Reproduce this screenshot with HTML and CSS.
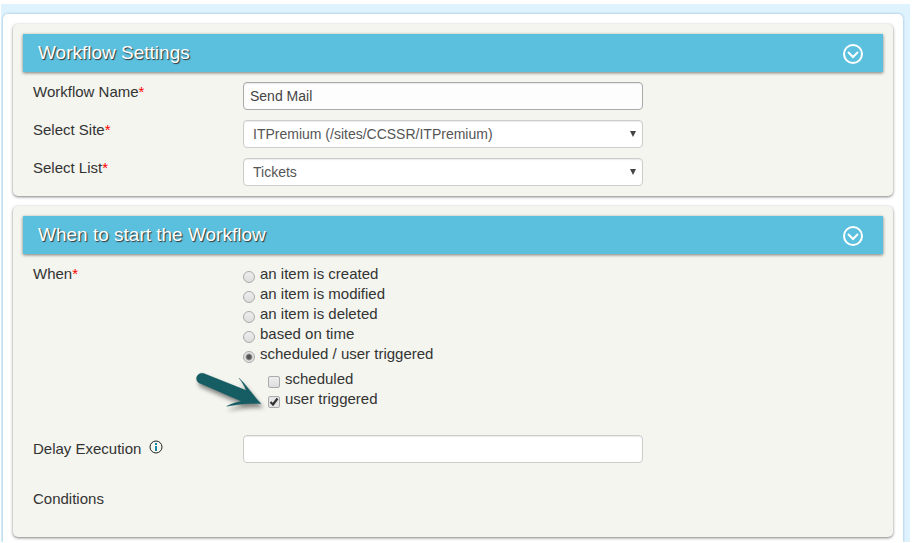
FILE: index.html
```html
<!DOCTYPE html>
<html lang="en">
<head>
<meta charset="utf-8">
<title>Workflow Settings</title>
<link rel="stylesheet" href="styles.css">
</head>
<body>
<main class="page">
<form class="sheet">
  <section class="card">
    <header class="card-header">
      <h2>Workflow Settings</h2>
      <button class="toggle" type="button" aria-label="Collapse workflow settings">
        <svg viewBox="0 0 20 20"><circle cx="10" cy="10" r="9"/><path d="M5 8l5 5 5-5"/></svg>
      </button>
    </header>
    <div class="fields">
      <div class="row">
        <label class="name" for="wf-name">Workflow Name<span class="required">*</span></label>
        <input class="control active" id="wf-name" type="text" value="Send Mail">
      </div>
      <div class="row">
        <label class="name" for="wf-site">Select Site<span class="required">*</span></label>
        <select class="control" id="wf-site"><option>ITPremium (/sites/CCSSR/ITPremium)</option></select>
      </div>
      <div class="row">
        <label class="name" for="wf-list">Select List<span class="required">*</span></label>
        <select class="control" id="wf-list"><option>Tickets</option></select>
      </div>
    </div>
  </section>

  <section class="card">
    <header class="card-header">
      <h2>When to start the Workflow</h2>
      <button class="toggle" type="button" aria-label="Collapse start options">
        <svg viewBox="0 0 20 20"><circle cx="10" cy="10" r="9"/><path d="M5 8l5 5 5-5"/></svg>
      </button>
    </header>
    <div class="fields start-fields">
      <div class="row" role="radiogroup" aria-labelledby="when-label">
        <span class="name" id="when-label">When<span class="required">*</span></span>
        <div class="options">
          <label class="option"><input type="radio" name="when">an item is created</label>
          <label class="option"><input type="radio" name="when">an item is modified</label>
          <label class="option"><input type="radio" name="when">an item is deleted</label>
          <label class="option"><input type="radio" name="when">based on time</label>
          <label class="option"><input type="radio" name="when" checked>scheduled / user triggered</label>
          <div class="suboptions">
            <label class="option"><input type="checkbox">scheduled</label>
            <label class="option"><input type="checkbox" checked>user triggered</label>
            <svg class="pointer" viewBox="0 0 240 150" aria-hidden="true">
              <path d="M40 25L168 76C164 64 157 52 147 39C166 56 190 92 213 116C180 114 145 117 110 124C126 115 142 111 154 109L26 53C12 43 22 21 40 25Z"/>
            </svg>
          </div>
        </div>
      </div>
      <div class="row centered">
        <label class="name info-label" for="delay">Delay Execution
          <svg class="info" viewBox="0 0 14 14" aria-hidden="true"><circle class="ring" cx="7" cy="7" r="6"/><path class="stem" d="M7 6v5M7 3v2"/></svg>
        </label>
        <input class="control" id="delay" type="text">
      </div>
      <div class="row">
        <span class="name">Conditions</span>
      </div>
    </div>
  </section>
</form>
</main>
</body>
</html>
```
FILE: styles.css
```css
* {
  box-sizing: border-box;
}

body {
  margin: 0;
  background: #fff;
  color: #333;
  font: 14px/20px "Liberation Sans", Arial, sans-serif;
}

.page {
  margin: 4px 3px 0 1px;
  padding: 10px 7px 0 2px;
  background: #dff3fe;
}

.sheet {
  display: flex;
  flex-direction: column;
  gap: 10px;
  padding: 10px 10px 5px;
  border-radius: 5px 5px 0 0;
  background: #fff;
  box-shadow: 0 0 3px #8fb8d0;
}

.card {
  padding: 10px;
  border-radius: 5px;
  background: #f4f5ef;
  box-shadow: 0 1px 3px rgba(0, 0, 0, 0.5);
}

.card-header {
  display: flex;
  align-items: center;
  justify-content: space-between;
  height: 38px;
  padding: 0 20px 0 15px;
  background: #5bc0de;
  box-shadow: 0 1px 3px rgba(0, 0, 0, 0.5);
}

.card-header h2 {
  margin: 0;
  color: #fff;
  font-size: 19px;
  font-weight: normal;
  text-shadow: 1px 1px 1px #333;
}

.toggle {
  width: 20px;
  height: 20px;
  margin-top: 2px;
  padding: 0;
  border: 0;
  background: none;
}

.toggle svg {
  display: block;
  fill: none;
  stroke: #fff;
  stroke-width: 2;
}

.fields {
  display: flex;
  flex-direction: column;
  gap: 10px;
  padding: 10px 10px 0;
}

.start-fields {
  gap: 26px;
  padding-bottom: 18px;
}

.row {
  display: grid;
  grid-template-columns: 210px minmax(0, 400px);
  align-items: start;
}

.centered {
  align-items: center;
}

.name,
.option {
  font-size: 15px;
}

.required {
  color: #f00;
}

.control {
  width: 100%;
  height: 28px;
  padding: 0 6px;
  border: 1px solid #ccc;
  border-radius: 4px;
  background: #fff;
  box-shadow: inset 0 1px 1px rgba(0, 0, 0, 0.08);
  color: #555;
  font: 14px/20px "Liberation Sans", Arial, sans-serif;
}

.active {
  border-color: #aaa;
  background: #fdfdfd;
  color: #444;
}

select.control {
  appearance: none;
  padding: 0 20px 0 9px;
  background: #fff url("data:image/svg+xml,%3Csvg xmlns='http://www.w3.org/2000/svg' viewBox='0 0 6 6'%3E%3Cpath d='M0 0h6L3 6z' fill='%23444'/%3E%3C/svg%3E") no-repeat right 6px center / 6px 6px;
}

.option {
  display: flex;
  align-items: center;
  gap: 5px;
  height: 20px;
}

.option input {
  appearance: none;
  width: 12px;
  height: 12px;
  margin: 6px 0 0;
  border: 1px solid #aaa;
  background: linear-gradient(#eee, #ddd);
}

.option input[type="radio"] {
  border-radius: 50%;
}

.option input[type="radio"]:checked {
  background: radial-gradient(circle, #555 0 2px, #e6e6e6 4px);
}

.option input[type="checkbox"] {
  border-radius: 2px;
}

.option input[type="checkbox"]:checked {
  background: #e6e6e6 url("data:image/svg+xml,%3Csvg xmlns='http://www.w3.org/2000/svg' viewBox='0 0 10 10'%3E%3Cpath d='M1.5 5L4 7.5 8.5 1.5' fill='none' stroke='%23333' stroke-width='2.2'/%3E%3C/svg%3E") center / 10px 10px;
}

.suboptions {
  position: relative;
  padding: 5px 0 0 25px;
}

.pointer {
  position: absolute;
  top: 1px;
  left: -53px;
  width: 80px;
  height: 50px;
  fill: #165c63;
  stroke: #165c63;
  stroke-width: 1;
  filter: drop-shadow(2px 4px 2px rgba(0, 0, 0, 0.45));
  pointer-events: none;
}

.info-label {
  display: flex;
  gap: 8px;
}

.info {
  width: 14px;
  height: 14px;
  margin-top: 1px;
  fill: none;
  stroke: #222;
}

.info .stem {
  stroke: #1787a8;
  stroke-width: 2;
}
```
